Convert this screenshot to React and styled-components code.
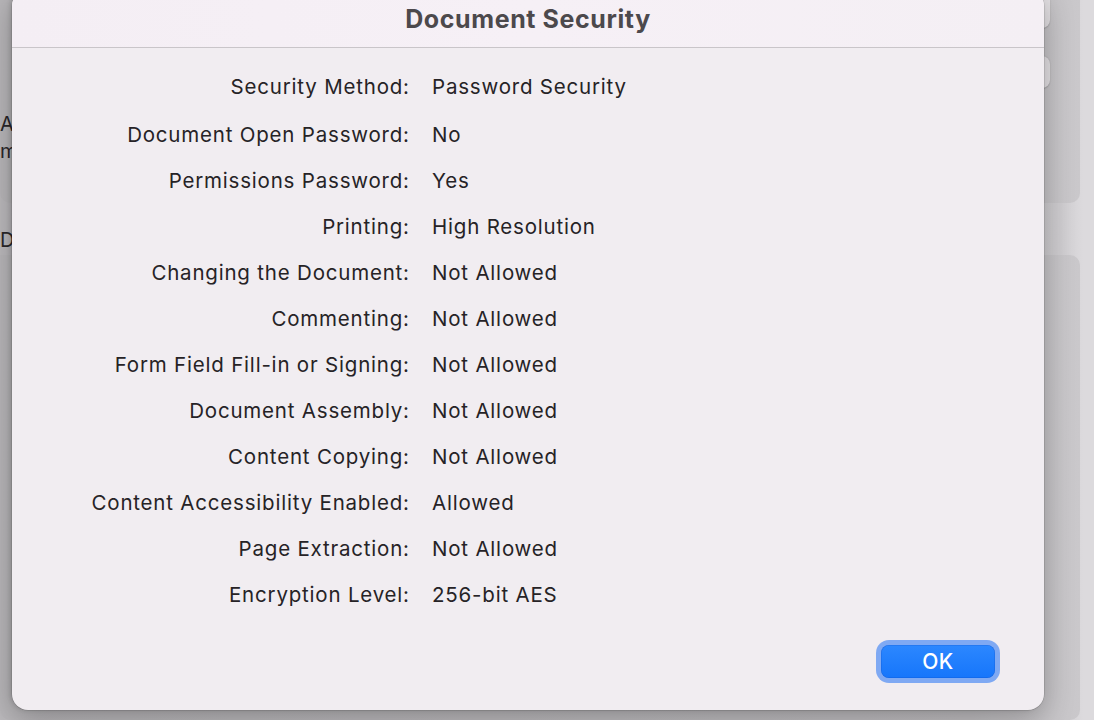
import React from 'react'
import styled, { createGlobalStyle } from 'styled-components'

const GlobalStyle = createGlobalStyle`
  html, body {
    margin: 0;
    padding: 0;
    height: 100%;
    overflow: hidden;
  }
  body {
    font-family: Inter, "Noto Sans", "Liberation Sans", sans-serif;
    -webkit-font-smoothing: antialiased;
  }
  #root {
    height: 100%;
  }
  * {
    box-sizing: border-box;
  }
`

const Screen = styled.div`
  position: relative;
  width: 1094px;
  height: 720px;
  overflow: hidden;
  background: linear-gradient(90deg, #bbb9bc 0%, #c3c1c4 60%, #cfcdd0 97%, #dcdadd 99%);
`

// background window, mostly hidden behind the sheet
const Backdrop = styled.div`
  display: flex;
  flex-direction: column;
  height: 100%;
  padding-right: 14px;
`

const Card = styled.div`
  flex: ${({ grow }) => (grow ? 1 : 'none')};
  height: ${({ h }) => (h ? `${h}px` : 'auto')};
  border-radius: 0 0 10px 10px;
  border-top-right-radius: ${({ topRound }) => (topRound ? '10px' : '0')};
  background: linear-gradient(90deg, #b8b6b9 0%, #c0bec1 90%, #cac8cb 100%);
  display: flex;
  flex-direction: column;
  font-size: 20px;
  line-height: 27px;
  color: #2a272a;
`

const ButtonStack = styled.div`
  align-self: flex-end;
  margin-right: 30px;
  display: flex;
  flex-direction: column;
  gap: 28px;
`

const GhostButton = styled.div`
  width: 80px;
  height: ${({ h }) => h}px;
  border-radius: 0 0 8px 8px;
  border-top-right-radius: ${({ round }) => (round ? '8px' : '0')};
  background: #e4e1e4;
  box-shadow: 0 0.5px 1.5px rgba(0, 0, 0, 0.2);
`

const CardText = styled.div`
  margin-top: 23px;
`

const Gap = styled.div`
  height: 52px;
  padding-top: 24px;
  font-size: 20px;
  line-height: 27px;
  color: #2a272a;
`

const Sheet = styled.div`
  position: absolute;
  top: -10px;
  left: 12px;
  width: 1032px;
  height: 720px;
  border-radius: 16px;
  background: #f1edf1;
  box-shadow: 0 0 0 0.5px rgba(0, 0, 0, 0.18), 0 8px 30px rgba(0, 0, 0, 0.28),
    -2px 0 4px rgba(0, 0, 0, 0.12);
  display: flex;
  flex-direction: column;
  overflow: hidden;
`

const Header = styled.div`
  height: 58px;
  display: flex;
  align-items: center;
  justify-content: center;
  background: linear-gradient(90deg, #f4eef4 0%, #f6f0f6 50%, #f4eff4 100%);
  border-bottom: 1px solid #c9c5c9;
`

const Title = styled.h1`
  margin: 0;
  padding-top: 1px;
  font-size: 25px;
  font-weight: 700;
  color: #4c494c;
  letter-spacing: 0.6px;
`

const Body = styled.div`
  display: grid;
  grid-template-columns: 397px auto;
  column-gap: 23px;
  row-gap: 22px;
  padding-top: 27px;
  flex: 1;
  align-content: start;

  & > :nth-child(-n + 2) {
    margin-bottom: 2px;
  }
`

const Label = styled.div`
  text-align: right;
  font-size: 20.5px;
  line-height: 24px;
  letter-spacing: 0.8px;
  color: #262326;
  white-space: nowrap;
  margin-right: -0.8px;
`

const Value = styled.div`
  font-size: 20.5px;
  line-height: 24px;
  letter-spacing: 0.8px;
  color: #262326;
  white-space: nowrap;
`

const Footer = styled.div`
  display: flex;
  justify-content: flex-end;
  padding: 0 44px 27px 0;
`

const Ring = styled.div`
  padding: 5px;
  border-radius: 13px;
  background: #7fa9f3;
`

const OkButton = styled.button`
  display: block;
  width: 114px;
  height: 33px;
  border: none;
  border-radius: 8px;
  background: linear-gradient(180deg, #2c87ff 0%, #1676fb 100%);
  box-shadow: inset 0 0 0 0.5px rgba(0, 60, 180, 0.35);
  color: #fff;
  font-family: Inter, "Noto Sans", "Liberation Sans", sans-serif;
  font-size: 21px;
  font-weight: 500;
  letter-spacing: 0.6px;
  line-height: 33px;
  padding: 0;
`

const rows = [
  ['Security Method:', 'Password Security'],
  ['Document Open Password:', 'No'],
  ['Permissions Password:', 'Yes'],
  ['Printing:', 'High Resolution'],
  ['Changing the Document:', 'Not Allowed'],
  ['Commenting:', 'Not Allowed'],
  ['Form Field Fill-in or Signing:', 'Not Allowed'],
  ['Document Assembly:', 'Not Allowed'],
  ['Content Copying:', 'Not Allowed'],
  ['Content Accessibility Enabled:', 'Allowed'],
  ['Page Extraction:', 'Not Allowed'],
  ['Encryption Level:', '256-bit AES'],
]

export default function App() {
  return (
    <Screen>
      <GlobalStyle />
      <Backdrop>
        <Card h={203}>
          <ButtonStack>
            <GhostButton h={28} />
            <GhostButton h={32} round />
          </ButtonStack>
          <CardText>
            <div>Allow</div>
            <div>more</div>
          </CardText>
        </Card>
        <Gap>Do</Gap>
        <Card grow topRound />
      </Backdrop>
      <Sheet>
        <Header>
          <Title>Document Security</Title>
        </Header>
        <Body>
          {rows.map(([label, value]) => (
            <React.Fragment key={label}>
              <Label>{label}</Label>
              <Value>{value}</Value>
            </React.Fragment>
          ))}
        </Body>
        <Footer>
          <Ring>
            <OkButton>OK</OkButton>
          </Ring>
        </Footer>
      </Sheet>
    </Screen>
  )
}
